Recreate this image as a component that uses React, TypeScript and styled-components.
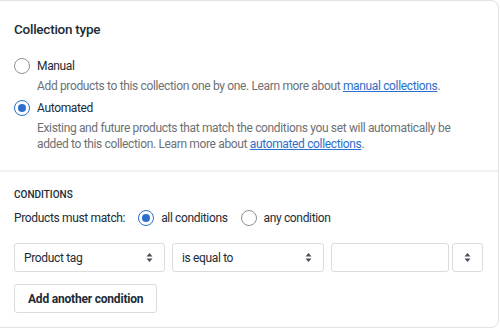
import React from "react";
import styled, { createGlobalStyle } from "styled-components";

const GlobalStyle = createGlobalStyle`
  html, body {
    margin: 0;
    padding: 0;
    background: #ffffff;
  }
  body {
    font-family: Roboto, "Noto Sans", sans-serif;
    color: #212b36;
    letter-spacing: -0.35px;
  }
`;

const Page = styled.div`
  width: 500px;
  height: 329px;
  padding: 0 1px 1px 0;
  box-sizing: border-box;
`;

const Card = styled.div`
  height: 100%;
  background: #fff;
  border: 1px solid #e4e4e4;
  border-left: none;
  border-radius: 0 8px 8px 0;
  box-sizing: border-box;
  display: flex;
  flex-direction: column;
`;

const Section = styled.section<{ $top: number }>`
  padding: ${(p) => p.$top}px 14px 0 14px;
  display: flex;
  flex-direction: column;
`;

const Divider = styled.div`
  height: 2px;
  background: #f1f1f1;
  margin-top: 18px;
`;

const Title = styled.h2`
  margin: 0;
  font-size: 13.5px;
  font-weight: 500;
  line-height: 20px;
  letter-spacing: -0.25px;
`;

const Subheading = styled.h3`
  margin: 0;
  font-size: 10px;
  font-weight: 500;
  line-height: 16px;
  letter-spacing: 0;
  text-transform: uppercase;
`;

const ChoiceList = styled.div`
  display: flex;
  flex-direction: column;
  gap: 5px;
  margin-top: 18px;
`;

const Choice = styled.label`
  display: flex;
  align-items: center;
  gap: 7px;
  font-size: 12px;
  line-height: 18px;
  cursor: pointer;
`;

const RadioCircle = styled.span<{ $checked?: boolean }>`
  width: 16px;
  height: 16px;
  box-sizing: border-box;
  border-radius: 50%;
  border: ${(p) => (p.$checked ? "1.5px solid #2c6ecb" : "1.5px solid #8c9196")};
  display: flex;
  align-items: center;
  justify-content: center;
  flex-shrink: 0;
  &::after {
    content: "";
    width: 8px;
    height: 8px;
    border-radius: 50%;
    background: ${(p) => (p.$checked ? "#2c6ecb" : "transparent")};
  }
`;

const HelpText = styled.p`
  margin: 3px 0 0 23px;
  font-size: 12px;
  line-height: 16px;
  color: #6d7175;
`;

const Link = styled.a`
  color: #2c6ecb;
  text-decoration: underline;
`;

const MatchRow = styled.div`
  display: flex;
  align-items: center;
  gap: 13px;
  margin-top: 6px;
  font-size: 12px;
  line-height: 18px;
`;

const ConditionRow = styled.div`
  display: flex;
  gap: 7px;
  margin-top: 16px;
`;

const SelectBox = styled.div<{ $width: number; $compact?: boolean }>`
  width: ${(p) => p.$width}px;
  height: 29px;
  box-sizing: border-box;
  border: 1px solid #dcdcdc;
  border-radius: 3px;
  display: flex;
  align-items: center;
  justify-content: ${(p) => (p.$compact ? "center" : "space-between")};
  padding: ${(p) => (p.$compact ? "0" : "0 11px 0 9px")};
  font-size: 12px;
  background: #fff;
`;

const InputBox = styled.div`
  width: 118px;
  height: 29px;
  box-sizing: border-box;
  border: 1px solid #dcdcdc;
  border-radius: 3px;
  margin-right: -4px;
  background: #fff;
`;

const Button = styled.button`
  margin-top: 12px;
  height: 29px;
  padding: 0 13px;
  border: 1px solid #dcdcdc;
  border-radius: 3px;
  background: #fff;
  font-family: inherit;
  font-size: 12px;
  font-weight: 700;
  letter-spacing: -0.2px;
  color: #212b36;
  align-self: flex-start;
`;

const Arrows = () => (
  <svg width="7" height="11" viewBox="0 0 7 11" aria-hidden>
    <path d="M3.5 1 6.5 4.5H.5z" fill="#454f5b" />
    <path d="M3.5 10 .5 6.5h6z" fill="#454f5b" />
  </svg>
);

const Radio = ({ checked, label }: { checked?: boolean; label: string }) => (
  <Choice>
    <RadioCircle $checked={checked} />
    {label}
  </Choice>
);

export default function App() {
  return (
    <Page>
      <GlobalStyle />
      <Card>
        <Section $top={18}>
          <Title>Collection type</Title>
          <ChoiceList>
            <div>
              <Radio label="Manual" />
              <HelpText>
                Add products to this collection one by one. Learn more about{" "}
                <Link href="#">manual collections</Link>.
              </HelpText>
            </div>
            <div>
              <Radio checked label="Automated" />
              <HelpText>
                Existing and future products that match the conditions you set will automatically be
                added to this collection. Learn more about{" "}
                <Link href="#">automated collections</Link>.
              </HelpText>
            </div>
          </ChoiceList>
        </Section>
        <Divider />
        <Section $top={15}>
          <Subheading>Conditions</Subheading>
          <MatchRow>
            <span>Products must match:</span>
            <Radio checked label="all conditions" />
            <Radio label="any condition" />
          </MatchRow>
          <ConditionRow>
            <SelectBox $width={151}>
              Product tag
              <Arrows />
            </SelectBox>
            <SelectBox $width={152}>
              is equal to
              <Arrows />
            </SelectBox>
            <InputBox />
            <SelectBox $width={31} $compact>
              <Arrows />
            </SelectBox>
          </ConditionRow>
          <Button>Add another condition</Button>
        </Section>
      </Card>
    </Page>
  );
}
